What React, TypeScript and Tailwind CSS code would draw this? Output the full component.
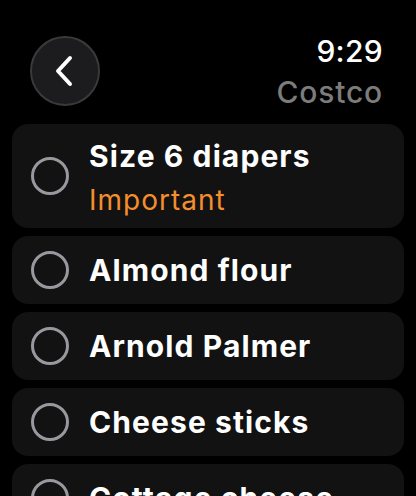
import React from 'react'

const items = [
  { name: 'Size 6 diapers', note: 'Important' },
  { name: 'Almond flour' },
  { name: 'Arnold Palmer' },
  { name: 'Cheese sticks' },
  { name: 'Cottage cheese' },
]

function BackButton() {
  return (
    <button className="w-[70px] h-[70px] rounded-full bg-[#1c1c1e] border-2 border-[#3a3a3c] flex items-center justify-center">
      <svg width="22" height="32" viewBox="0 0 22 32" fill="none" className="mr-[3px]">
        <path d="M17 3 L5 16 L17 29" stroke="white" strokeWidth="4" strokeLinecap="round" strokeLinejoin="round" />
      </svg>
    </button>
  )
}

export default function App() {
  return (
    <div
      className="w-[416px] h-[496px] bg-black overflow-hidden"
      style={{ fontFamily: 'Inter, "Noto Sans", sans-serif' }}
    >
      {/* Header */}
      <div className="flex justify-between items-start pl-[30px] pr-[33px] pt-[36px] h-[124px]">
        <BackButton />
        <div className="flex flex-col items-end mt-[-3px]">
          <div className="text-white text-[30px] leading-[36px] font-medium tracking-[0.3px]">9:29</div>
          <div className="text-[#7c7c7c] text-[30px] leading-[36px] font-medium tracking-[0.8px] mt-[5px]">Costco</div>
        </div>
      </div>

      {/* List */}
      <div className="flex flex-col gap-[8px] px-[12px]">
        {items.map((it) => (
          <div
            key={it.name}
            className={`flex items-center bg-[#121212] rounded-[16px] shrink-0 ${it.note ? 'h-[104px]' : 'h-[68px]'}`}
          >
            <div className="w-[38px] h-[38px] rounded-full border-[3px] border-[#98989e] ml-[19px] mr-[20px] shrink-0" />
            <div className={`flex flex-col ${it.note ? 'pt-[3px]' : ''}`}>
              <div className="text-white text-[30px] leading-[38px] font-bold tracking-[1.1px] whitespace-nowrap">{it.name}</div>
              {it.note && (
                <div className="text-[#f58e2d] text-[28px] leading-[36px] font-normal tracking-[1px] mt-[7px]">{it.note}</div>
              )}
            </div>
          </div>
        ))}
      </div>
    </div>
  )
}
